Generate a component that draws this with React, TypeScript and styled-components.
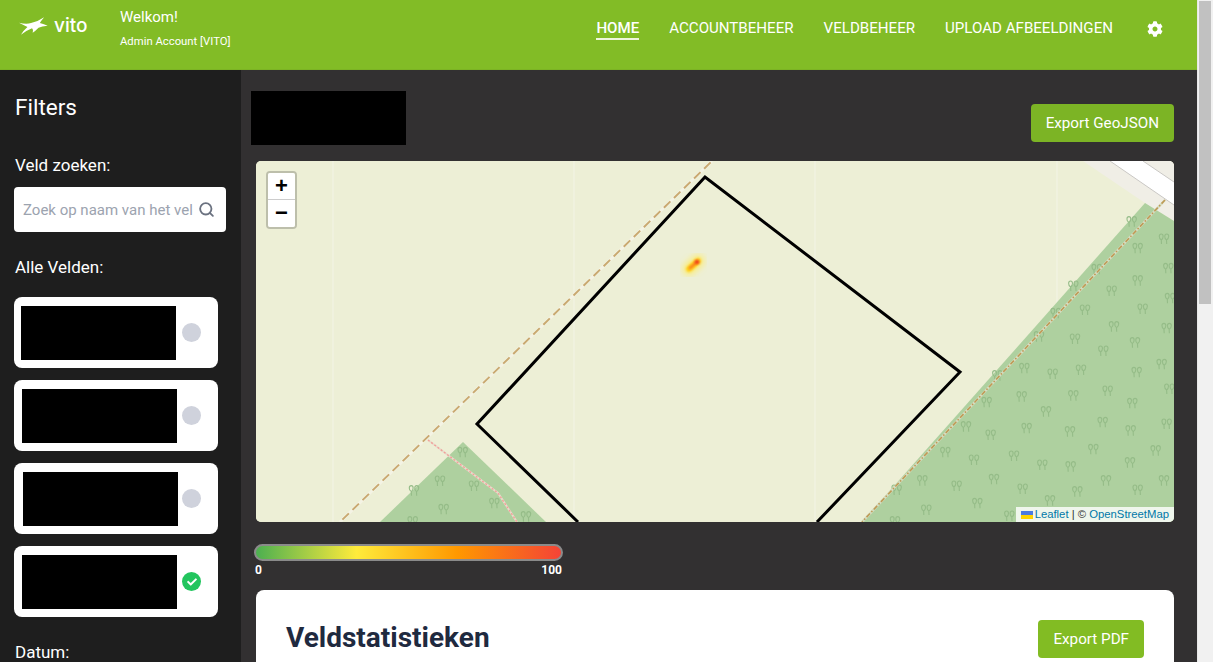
import React from "react";
import styled, { createGlobalStyle } from "styled-components";
import { FaCog, FaCheck } from "react-icons/fa";
import { Search } from "lucide-react";

const Global = createGlobalStyle`
  html, body { margin: 0; padding: 0; height: 100%; overflow: hidden; }
  body { font-family: Roboto, "Liberation Sans", sans-serif; background: #323031; }
  * { box-sizing: border-box; }
`;

const Shell = styled.div`display: flex; height: 100vh; overflow: hidden;`;
const Page = styled.div`flex: 1; min-width: 0; display: flex; flex-direction: column;`;
const ScrollRail = styled.div`width: 16px; background: #f1f1f1; padding: 1px 2px 0 1px; border-left: 1px solid #e8e8e8;`;
const ScrollThumb = styled.div`height: 303px; background: #c1c1c1;`;

const Header = styled.header`
  height: 70px; flex: none; background: #82bc26; display: flex; align-items: flex-start;
  color: #fff; border-bottom: 1px solid #7cb324;
`;
const Logo = styled.div`width: 120px; height: 52px; padding-left: 18px; display: flex; align-items: center; gap: 5px;`;
const LogoWord = styled.span`font-family: Inter, sans-serif; font-size: 19px; line-height: 1; margin: -2px 0 0 0; font-weight: 500;`;
const Welcome = styled.div`display: flex; flex-direction: column; padding-top: 8px;`;
const WelcomeTitle = styled.span`font-size: 15px; line-height: 19px;`;
const WelcomeName = styled.span`font-size: 11.3px; line-height: 14px; margin-top: 8px;`;
const Nav = styled.nav`margin-left: auto; display: flex; gap: 30px; align-items: flex-start; padding: 19px 34px 0 0;`;
const NavItem = styled.a<{ $active?: boolean }>`
  font-size: 15.1px; line-height: 19px; color: #fff; font-weight: ${p => (p.$active ? 500 : 400)};
  border-bottom: 2px solid ${p => (p.$active ? "#eef5dc" : "transparent")};
`;
const GearWrap = styled.span`display: flex; height: 19px; align-items: center; font-size: 16px; margin-left: 4px;`;

const Body = styled.div`flex: 1; min-height: 0; display: flex;`;
const Sidebar = styled.aside`width: 241px; flex: none; background: #1e1e1e; color: #fff; padding: 19px 15px 0 14px;`;
const SideTitle = styled.h2`margin: 0; font-size: 22.5px; font-weight: 400; line-height: 36px; padding-left: 1px;`;
const SideLabel = styled.div<{ $top: number }>`
  font-size: 17px; line-height: 24px; margin-top: ${p => p.$top}px; padding-left: 1px;
`;
const SearchBox = styled.div`
  margin-top: 10px; height: 45px; width: 212px; background: #fff; border-radius: 4px;
  display: flex; align-items: center; padding: 0 11px 0 9px; gap: 5px;
`;
const SearchInput = styled.input`
  flex: 1; min-width: 0; border: 0; outline: 0; padding: 0; background: transparent; font: 15px Roboto, sans-serif;
  &::placeholder { color: #9ca3af; opacity: 1; }
`;
const SearchGlyph = styled.span`display: flex; color: #6b7280;`;
const FieldList = styled.div`margin-top: 18px; display: flex; flex-direction: column; gap: 12px;`;
const FieldCard = styled.div`
  width: 204px; height: 71px; background: #fff; border-radius: 8px; display: flex; align-items: center;
`;
const FieldRedaction = styled.div<{ $indent: number }>`
  width: 155px; height: 54px; background: #000; margin-left: ${p => p.$indent}px;
`;
const StatusDot = styled.span<{ $on?: boolean }>`
  width: 19px; height: 19px; border-radius: 50%; margin: 0 17px 0 auto;
  background: ${p => (p.$on ? "#22c55e" : "#cfd2dc")}; color: #fff; font-size: 10px;
  display: flex; align-items: center; justify-content: center;
`;

const Main = styled.main`flex: 1; min-width: 0; background: #323031; padding: 21px 23px 0 15px; display: flex; flex-direction: column;`;
const HeadRow = styled.div`display: flex; justify-content: space-between; align-items: flex-end;`;
const TitleRedaction = styled.div`width: 155px; height: 54px; background: #000; margin-left: -5px;`;
const Button = styled.button<{ $shade?: string }>`
  border: 0; border-radius: 4px; background: ${p => p.$shade ?? "#82bc23"}; color: #fff;
  font: 400 15.2px Roboto, sans-serif; height: 38px; padding: 0 15px;
`;
const HeadButton = styled(Button)`margin-bottom: 3px;`;

const MapFrame = styled.div`
  position: relative; margin-top: 16px; height: 361px; flex: none; background: #edefd6; border-radius: 5px; overflow: hidden;
`;
const MapArt = styled.svg`display: block; width: 100%; height: 100%;`;
const ZoomBar = styled.div`
  position: absolute; left: 10px; top: 10px; width: 31px; border: 2px solid rgba(0,0,0,.2); border-radius: 4px;
  background-clip: padding-box; display: flex; flex-direction: column;
`;
const ZoomBtn = styled.span<{ $first?: boolean }>`
  height: 27px; background: #fff; color: #000; font: 700 22px/26px "Liberation Sans", sans-serif; text-align: center;
  border-bottom: ${p => (p.$first ? "1px solid #ccc" : "0")};
  border-radius: ${p => (p.$first ? "2px 2px 0 0" : "0 0 2px 2px")};
`;
const Attribution = styled.div`
  position: absolute; right: 0; bottom: 0; height: 15px; padding: 0 5px; background: rgba(255,255,255,.8);
  font: 11.3px/15px "Liberation Sans", sans-serif; color: #333; display: flex; align-items: center; white-space: pre;
`;
const AttrLink = styled.a`color: #0078a8;`;
const Flag = styled.svg`width: 12px; height: 8px; margin-right: 2px;`;

const Legend = styled.div`margin: 22px 0 0 -2px; width: 309px; flex: none;`;
const LegendBar = styled.div`
  height: 17px; border-radius: 9px; border: 2px solid #8a8a8a;
  background: linear-gradient(to right, #4caf50 0%, #ffeb3b 33%, #ff9800 66%, #f44336 100%);
`;
const LegendScale = styled.div`
  display: flex; justify-content: space-between; color: #fff; font-size: 12px; font-weight: 700; line-height: 14px; margin-top: 2px; padding: 0 1px 0 1px;
`;

const StatsCard = styled.section`
  margin-top: 13px; flex: none; min-height: 300px; background: #fff; border-radius: 8px; padding: 30px;
  display: flex; align-items: flex-start; justify-content: space-between;
`;
const StatsTitle = styled.h2`margin: 0; font-size: 28px; line-height: 36px; font-weight: 700; color: #1f2a3f;`;

const TREES: [number, number][] = [[815,185],[912,237],[833,265],[925,325],[710,328],[833,362],[640,378],[755,393],[930,415],[587,460],[675,450],[848,447],[762,500],[920,505],[537,530],[645,537],[825,548],[730,573],[905,613],[493,625],[412,647],[578,642],[663,630],[830,637],[928,687],[485,710],[380,727],[640,707],[743,693],[817,730],[558,755],[728,787],[920,792],[318,800],[500,805],[630,815],[812,812],[392,825],[256,877],[342,900],[462,888],[700,868],[887,872],[810,908],[547,915],[632,920],[187,962],[402,958],[290,978],[738,962],[912,962],[488,987],[110,990],[652,995],[833,990],[352,1030],[570,1022],[199,1050],[448,1068],[105,1085]];
const TREES2: [number, number][] = [[668,97],[600,183],[702,198],[522,212],[763,250],[611,268],[858,290],[518,305]];

const MapDrawing = () => (
  <MapArt viewBox="0 0 918 361" preserveAspectRatio="none">
    <defs>
      <g id="tree" fill="none" stroke="#95bc88" strokeWidth="1.1">
        <path d="M-2.5 5 L-2.7 1 C-5.6 -1 -5.2 -5 -2.7 -5 C-.4 -5 -.1 -1 -2.7 1" />
        <path d="M2.7 5 L2.5 1 C-.1 -1 .4 -5 2.7 -5 C5.2 -5 5.6 -1 2.5 1" />
      </g>
      <filter id="soft" x="-100%" y="-100%" width="300%" height="300%">
        <feGaussianBlur stdDeviation="1.2" />
      </filter>
      <filter id="softer" x="-100%" y="-100%" width="300%" height="300%">
        <feGaussianBlur stdDeviation="3" />
      </filter>
    </defs>
    <rect width="918" height="361" fill="#edefd6" />
    {[77, 318, 559, 801].map(x => (
      <line key={x} x1={x} y1="0" x2={x} y2="361" stroke="#f3f4e6" strokeWidth="1" />
    ))}
    <polygon points="827,0 889,42 918,60 918,0" fill="#f0eee6" />
    <polygon points="854,0 918,44 918,21 887,0" fill="#fff" />
    <path d="M854 0 L918 44 M887 0 L918 21" stroke="#c9c7c4" strokeWidth="1" fill="none" />
    <polygon points="889,42 918,60 918,361 606,361" fill="#aed09f" />
    <polygon points="207,281 124,361 290,361" fill="#aed09f" />
    {TREES.map(([x, y]) => (
      <use key={`${x}-${y}`} href="#tree" x={604 + x / 3} y={y / 3 - 1} />
    ))}
    {TREES2.map(([x, y]) => (
      <use key={`${x}-${y}`} href="#tree" x={x / 3 - 16} y={259 + y / 3} />
    ))}
    <line x1="456" y1="0" x2="84" y2="361" stroke="#f4f3e4" strokeWidth="3" />
    <line x1="456" y1="0" x2="84" y2="361" stroke="#c9a970" strokeWidth="2" strokeDasharray="9 5" strokeDashoffset="-2" />
    <line x1="909" y1="39" x2="606" y2="361" stroke="#d5dcc0" strokeWidth="2.5" />
    <line x1="909" y1="39" x2="606" y2="361" stroke="#bf9a55" strokeWidth="1.6" strokeDasharray="5 2 1.5 2" />
    <polyline points="172,279 242,332 261,361" fill="none" stroke="#e8dccb" strokeWidth="2" />
    <polyline points="172,279 242,332 261,361" fill="none" stroke="#f2a09a" strokeWidth="1.4" strokeDasharray="2 2" />
    <polyline points="322,361 221,263 449,16 704,211 561,361" fill="none" stroke="#000" strokeWidth="3" />
    <line x1="433" y1="108" x2="442" y2="100" stroke="#ffeb60" strokeOpacity=".75" strokeWidth="13" strokeLinecap="round" filter="url(#softer)" />
    <line x1="433" y1="108" x2="442" y2="100" stroke="#ffd21f" strokeWidth="6" strokeLinecap="round" filter="url(#soft)" />
    <line x1="434" y1="107" x2="441" y2="101" stroke="#fb8a1c" strokeWidth="3" strokeLinecap="round" filter="url(#soft)" />
    <ellipse cx="441" cy="101" rx="2.5" ry="2.2" fill="#f0431c" filter="url(#soft)" />
  </MapArt>
);

const Swoosh = () => (
  <svg width="31" height="20" viewBox="55 55 95 60" aria-hidden="true">
    <path
      fill="#fff"
      d="M58 75 Q80 80 95 76 Q118 70 135 58 Q125 70 122 76 Q135 80 146 84 Q128 86 118 90 Q108 100 100 106 Q103 96 98 92 Q82 98 64 112 Q72 98 84 88 Q72 82 58 75Z"
    />
  </svg>
);

const fields = [
  { indent: 7, on: false },
  { indent: 8, on: false },
  { indent: 9, on: false },
  { indent: 8, on: true },
];

export default function App() {
  return (
    <>
      <Global />
      <Shell>
        <Page>
          <Header>
            <Logo>
              <Swoosh />
              <LogoWord>vito</LogoWord>
            </Logo>
            <Welcome>
              <WelcomeTitle>Welkom!</WelcomeTitle>
              <WelcomeName>Admin Account [VITO]</WelcomeName>
            </Welcome>
            <Nav>
              <NavItem $active>HOME</NavItem>
              <NavItem>ACCOUNTBEHEER</NavItem>
              <NavItem>VELDBEHEER</NavItem>
              <NavItem>UPLOAD AFBEELDINGEN</NavItem>
              <GearWrap><FaCog /></GearWrap>
            </Nav>
          </Header>
          <Body>
            <Sidebar>
              <SideTitle>Filters</SideTitle>
              <SideLabel $top={28}>Veld zoeken:</SideLabel>
              <SearchBox>
                <SearchInput placeholder="Zoek op naam van het veld" readOnly />
                <SearchGlyph><Search size={17} strokeWidth={2.6} /></SearchGlyph>
              </SearchBox>
              <SideLabel $top={23}>Alle Velden:</SideLabel>
              <FieldList>
                {fields.map((f, i) => (
                  <FieldCard key={i}>
                    <FieldRedaction $indent={f.indent} />
                    <StatusDot $on={f.on}>{f.on && <FaCheck />}</StatusDot>
                  </FieldCard>
                ))}
              </FieldList>
              <SideLabel $top={23}>Datum:</SideLabel>
            </Sidebar>
            <Main>
              <HeadRow>
                <TitleRedaction />
                <HeadButton $shade="#7cb425">Export GeoJSON</HeadButton>
              </HeadRow>
              <MapFrame>
                <MapDrawing />
                <ZoomBar>
                  <ZoomBtn $first>+</ZoomBtn>
                  <ZoomBtn>−</ZoomBtn>
                </ZoomBar>
                <Attribution>
                  <Flag viewBox="0 0 12 8"><rect width="12" height="4" fill="#4C7BE1" /><rect y="4" width="12" height="4" fill="#FFD500" /></Flag>
                  <AttrLink>Leaflet</AttrLink> | © <AttrLink>OpenStreetMap</AttrLink>
                </Attribution>
              </MapFrame>
              <Legend>
                <LegendBar />
                <LegendScale><span>0</span><span>100</span></LegendScale>
              </Legend>
              <StatsCard>
                <StatsTitle>Veldstatistieken</StatsTitle>
                <Button>Export PDF</Button>
              </StatsCard>
            </Main>
          </Body>
        </Page>
        <ScrollRail><ScrollThumb /></ScrollRail>
      </Shell>
    </>
  );
}
